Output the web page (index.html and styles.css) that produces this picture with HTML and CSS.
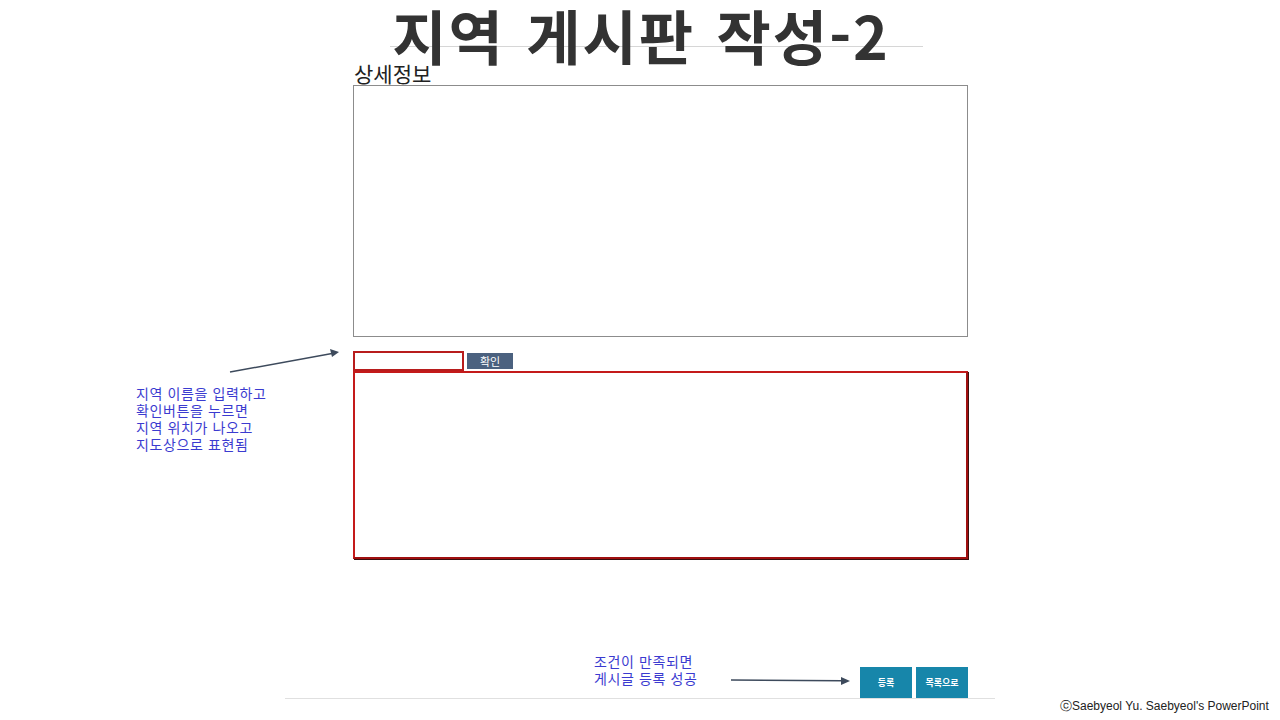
FILE: index.html
```html
<!DOCTYPE html>
<html lang="ko">
<head>
<meta charset="utf-8">
<link rel="stylesheet" href="styles.css">
</head>
<body>
<div class="slide">
  <header class="title-wrap">
    <div class="title-rule"></div>
    <h1 class="title">지역 게시판 작성-2</h1>
  </header>
  <main class="form">
    <div class="label">상세정보</div>
    <div class="detail-box"></div>
    <div class="search-row">
      <div class="region-input"></div>
      <div class="confirm-btn">확인</div>
    </div>
    <div class="map-box"></div>
  </main>
  <footer class="footer">
    <div class="actions">
      <div class="act-btn">등록</div>
      <div class="act-btn">목록으로</div>
    </div>
  </footer>
  <div class="footer-rule"></div>
  <div class="copyright">ⓒSaebyeol Yu. Saebyeol's PowerPoint</div>

  <div class="note note-left">지역 이름을 입력하고<br>확인버튼을 누르면<br>지역 위치가 나오고<br>지도상으로 표현됨</div>
  <div class="note note-bottom">조건이 만족되면<br>게시글 등록 성공</div>

  <svg class="arrows" width="1280" height="720" viewBox="0 0 1280 720">
    <line x1="230" y1="372" x2="332" y2="353.5" stroke="#3d4a5c" stroke-width="1.5"/>
    <polygon points="339,352 330,349 332,357" fill="#3d4a5c"/>
    <line x1="731" y1="680" x2="842" y2="680.7" stroke="#3d4a5c" stroke-width="1.5"/>
    <polygon points="850,681 841,677 841,685" fill="#3d4a5c"/>
  </svg>
</div>
</body>
</html>
```
FILE: styles.css
```css
html, body {
  margin: 0;
  padding: 0;
  background: #fff;
}
.slide {
  position: relative;
  width: 1280px;
  height: 720px;
  overflow: hidden;
  font-family: "Noto Sans CJK KR", "Noto Sans", sans-serif;
}
.title-wrap {
  position: relative;
  height: 62px;
  display: flex;
  justify-content: center;
}
.title-rule {
  position: absolute;
  left: 390px;
  top: 46px;
  width: 533px;
  height: 1px;
  background: #d6d6d6;
}
.title {
  position: relative;
  margin: 0;
  padding-left: 2px;
  font-size: 59px;
  font-weight: 700;
  line-height: 70px;
  height: 62px;
  color: #333;
  letter-spacing: 2px;
  word-spacing: 3px;
  white-space: nowrap;
}
.form {
  margin-left: 353px;
  width: 616px;
  display: flex;
  flex-direction: column;
}
.label {
  font-size: 21px;
  line-height: 23px;
  color: #222;
  padding-left: 1px;
}
.detail-box {
  height: 250px;
  border: 1px solid #8c8c8c;
  width: 613px;
}
.search-row {
  margin-top: 14px;
  display: flex;
  align-items: flex-start;
  gap: 3px;
  height: 20px;
}
.region-input {
  width: 107px;
  height: 16px;
  border: 2px solid #b81c1c;
}
.confirm-btn {
  margin-top: 2px;
  width: 46px;
  height: 16px;
  background: #4b617f;
  color: #fff;
  font-size: 11px;
  line-height: 16px;
  text-align: center;
}
.map-box {
  height: 184px;
  width: 611px;
  border: 2px solid #c41a1a;
  border-right-color: #a01010;
  border-bottom-color: #a01010;
  box-shadow: 1px 1px 0 #3a1010;
}
.footer {
  margin-left: 860px;
  margin-top: 108px;
}
.actions {
  display: flex;
  gap: 4px;
}
.act-btn {
  width: 52px;
  height: 31px;
  background: #1786aa;
  color: #fff;
  font-size: 9px;
  font-weight: 700;
  line-height: 31px;
  text-align: center;
}
.footer-rule {
  position: absolute;
  left: 285px;
  top: 698px;
  width: 710px;
  height: 1px;
  background: #e0e0e0;
}
.copyright {
  position: absolute;
  left: 1060px;
  top: 698px;
  font-family: "Liberation Sans", Arial, sans-serif;
  font-size: 12px;
  line-height: 16px;
  color: #222;
}
.note {
  position: absolute;
  color: #3b3bd0;
  font-size: 14px;
  line-height: 17px;
  letter-spacing: 0.6px;
  white-space: nowrap;
}
.note-left {
  left: 136px;
  top: 385px;
}
.note-bottom {
  left: 594px;
  top: 653px;
}
.arrows {
  position: absolute;
  left: 0;
  top: 0;
  pointer-events: none;
}
```
